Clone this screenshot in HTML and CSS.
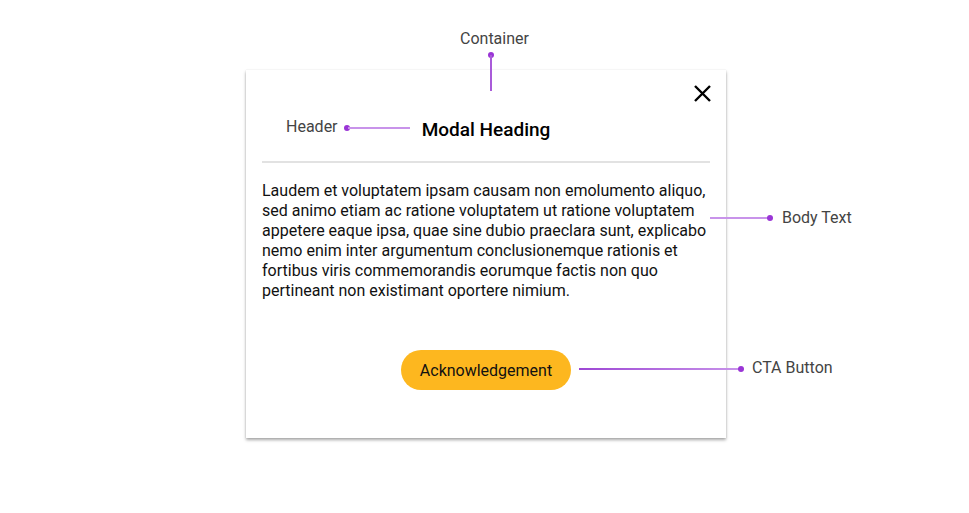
FILE: index.html
```html
<!DOCTYPE html>
<html lang="en">
<head>
    <meta charset="UTF-8">
    <meta name="viewport" content="width=device-width, initial-scale=1.0">
    <title>Modal Anatomy</title>
    <link rel="stylesheet" href="styles.css">
</head>
<body>

<div class="stage">

    <div class="modal">
        <button class="close" aria-label="Close">
            <svg width="17" height="17" viewBox="0 0 17 17">
                <path d="M1 1 L16 16 M16 1 L1 16" stroke="#000" stroke-width="2.4" fill="none"/>
            </svg>
        </button>

        <div class="modal-header">
            <h2>Modal Heading</h2>
        </div>

        <p class="modal-body">
            Laudem et voluptatem ipsam causam non emolumento aliquo, sed animo etiam ac ratione voluptatem ut ratione voluptatem appetere eaque ipsa, quae sine dubio praeclara sunt, explicabo nemo enim inter argumentum conclusionemque rationis et fortibus viris commemorandis eorumque factis non quo pertineant non existimant oportere nimium.
        </p>

        <div class="modal-footer">
            <button class="cta">Acknowledgement</button>
        </div>
    </div>

    <!-- annotations -->
    <span class="label label-container">Container</span>
    <span class="dot dot-container"></span>
    <span class="vline line-container"></span>

    <span class="label label-header">Header</span>
    <span class="dot dot-header"></span>
    <span class="hline line-header"></span>

    <span class="hline line-body"></span>
    <span class="dot dot-body"></span>
    <span class="label label-body">Body Text</span>

    <span class="hline line-cta"></span>
    <span class="dot dot-cta"></span>
    <span class="label label-cta">CTA Button</span>

</div>

</body>
</html>
```

FILE: styles.css
```css
body {
    margin: 0;
    background-color: #fff;
    font-family: Roboto, 'Noto Sans', sans-serif;
    color: #000;
}

.stage {
    position: relative;
    width: 969px;
    height: 513px;
    overflow: hidden;
    padding-top: 70px;
    box-sizing: border-box;
}

.modal {
    position: relative;
    margin-left: 246px;
    width: 480px;
    height: 368px;
    box-sizing: border-box;
    padding: 0 16px;
    background-color: #fff;
    box-shadow: 0 2px 3px rgba(0, 0, 0, 0.35), 0 0 1px rgba(0, 0, 0, 0.12);
}

.close {
    position: absolute;
    top: 15px;
    right: 15px;
    padding: 0;
    border: none;
    background: none;
    line-height: 0;
}

.modal-header {
    height: 93px;
    box-sizing: border-box;
    padding-top: 28px;
    display: flex;
    align-items: center;
    justify-content: center;
    border-bottom: 2px solid #e2e2e2;
}

.modal-header h2 {
    margin: 0;
    font-size: 19px;
    font-weight: 500;
}

.modal-body {
    margin: 18px 0 0;
    font-size: 16px;
    line-height: 20px;
    color: #111;
}

.modal-footer {
    display: flex;
    justify-content: center;
    margin-top: 49px;
}

.cta {
    width: 170px;
    height: 40px;
    border: none;
    border-radius: 20px;
    background-color: #fdb71f;
    font-family: Roboto, sans-serif;
    font-size: 16px;
    color: #111;
}

/* annotations */
.label {
    position: absolute;
    font-size: 16px;
    line-height: 20px;
    color: #444;
}

.dot {
    position: absolute;
    width: 6px;
    height: 6px;
    border-radius: 50%;
    background-color: #9a35d6;
}

.hline,
.vline {
    position: absolute;
    background-color: #c893ea;
}

.hline { height: 2px; }
.vline { width: 2px; }

.label-container { left: 460px; top: 29px; }
.dot-container { left: 488px; top: 52px; }
.line-container { left: 490px; top: 55px; height: 36px; background-color: #a95bd9; width: 1.5px; }

.label-header { left: 286px; top: 117px; }
.dot-header { left: 344px; top: 125px; }
.line-header { left: 348px; top: 127px; width: 62px; }

.line-body { left: 710px; top: 217px; width: 60px; }
.dot-body { left: 767px; top: 215px; }
.label-body { left: 782px; top: 208px; }

.line-cta { left: 579px; top: 368px; width: 162px; height: 1.5px; background: linear-gradient(to right, #9d47d4, #c893ea); }
.dot-cta { left: 738px; top: 366px; }
.label-cta { left: 752px; top: 358px; }
```
